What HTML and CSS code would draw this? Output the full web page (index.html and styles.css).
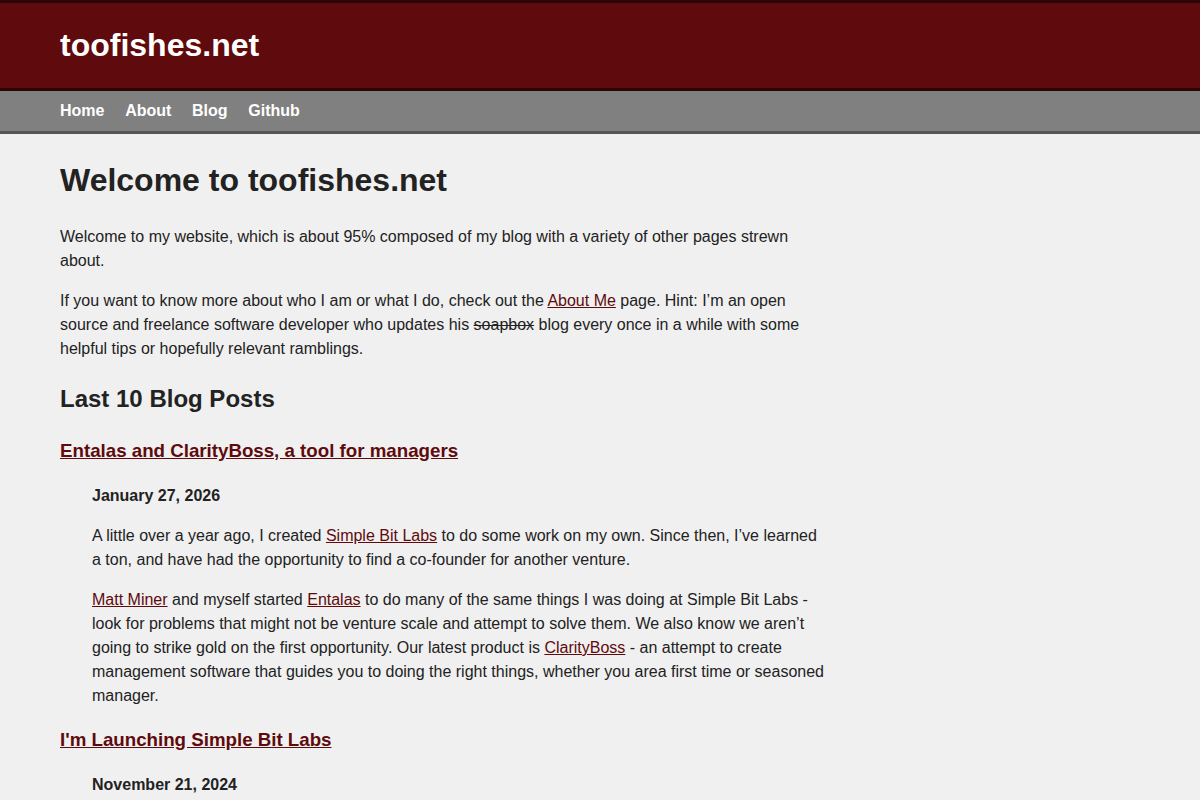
FILE: index.html
```html
<!DOCTYPE html>
<html lang="en">
<head>
<meta charset="utf-8">
<title>toofishes.net</title>
<link rel="stylesheet" href="styles.css">
</head>
<body>
<header class="site-header">
  <div class="wrap"><a class="site-title" href="#">toofishes.net</a></div>
</header>
<nav class="site-nav">
  <div class="wrap nav-links">
    <a href="#">Home</a>
    <a href="#">About</a>
    <a href="#">Blog</a>
    <a href="#">Github</a>
  </div>
</nav>
<main class="wrap content">
  <h1>Welcome to toofishes.net</h1>
  <p>Welcome to my website, which is about 95% composed of my blog with a variety of other pages strewn about.</p>
  <p>If you want to know more about who I am or what I do, check out the <a href="#">About Me</a> page. Hint: I’m an open source and freelance software developer who updates his <del>soapbox</del> blog every once in a while with some helpful tips or hopefully relevant ramblings.</p>
  <h2>Last 10 Blog Posts</h2>
  <article class="post">
    <h3><a href="#">Entalas and ClarityBoss, a tool for managers</a></h3>
    <div class="post-body">
      <div class="post-date">January 27, 2026</div>
      <p>A little over a year ago, I created <a href="#">Simple Bit Labs</a> to do some work on my own. Since then, I’ve learned a ton, and have had the opportunity to find a co-founder for another venture.</p>
      <p><a href="#">Matt Miner</a> and myself started <a href="#">Entalas</a> to do many of the same things I was doing at Simple Bit Labs - look for problems that might not be venture scale and attempt to solve them. We also know we aren’t going to strike gold on the first opportunity. Our latest product is <a href="#">ClarityBoss</a> - an attempt to create management software that guides you to doing the right things, whether you area first time or seasoned manager.</p>
    </div>
  </article>
  <article class="post">
    <h3><a href="#">I'm Launching Simple Bit Labs</a></h3>
    <div class="post-body">
      <div class="post-date">November 21, 2024</div>
      <p>Earlier this year, I decided to start a company of my own to work on software projects.</p>
    </div>
  </article>
</main>
</body>
</html>
```
FILE: styles.css
```css
html, body {
  margin: 0;
  padding: 0;
}
body {
  background: #f0f0f0;
  color: #222222;
  font-family: "Liberation Sans", Arial, sans-serif;
  font-size: 16px;
  line-height: 24px;
}
.wrap {
  max-width: 768px;
  margin: 0;
  padding: 0 60px;
}
.site-header {
  background: #5f0a0c;
  border-top: 3px solid #2a0606;
  border-bottom: 3px solid #2a0606;
  height: 85px;
  display: flex;
  align-items: center;
}
.site-title {
  color: #ffffff;
  font-size: 32px;
  font-weight: bold;
  line-height: 37px;
  text-decoration: none;
  display: block;
  margin-top: -1px;
}
.site-nav {
  background: #808080;
  border-bottom: 3px solid #555555;
  height: 40px;
}
.nav-links {
  display: flex;
  gap: 20.7px;
  align-items: center;
  height: 40px;
}
.nav-links a {
  color: #ffffff;
  font-weight: bold;
  font-size: 16px;
  text-decoration: none;
}
.content {
  padding-top: 28px;
}
h1 {
  font-size: 32px;
  line-height: 37px;
  margin: 0 0 26px;
}
p {
  margin: 0 0 16px;
}
h2 {
  font-size: 24px;
  line-height: 28px;
  margin: 24px 0 27px;
}
h3 {
  font-size: 18.72px;
  line-height: 22px;
  margin: 0 0 22px;
}
a {
  color: #5f0a0c;
}
del {
  text-decoration: line-through;
}
.post {
  margin-bottom: 21px;
}
.post-body {
  padding-left: 32px;
}
.post-date {
  font-weight: bold;
  margin-bottom: 16px;
}
```
